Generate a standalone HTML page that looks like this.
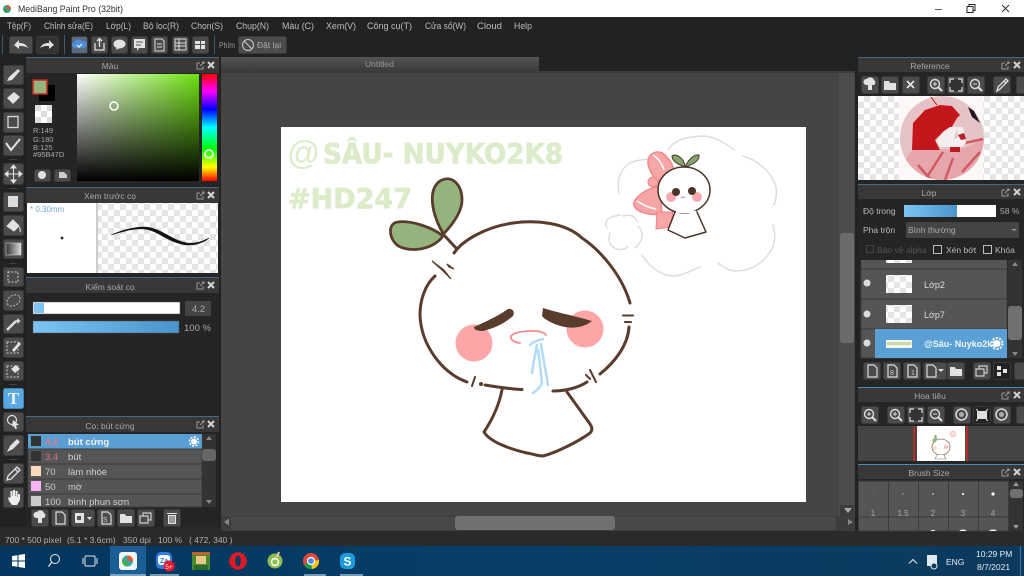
<!DOCTYPE html>
<html><head><meta charset="utf-8"><title>MediBang Paint Pro</title>
<style>
html,body{margin:0;padding:0;background:#222;overflow:hidden}
svg{display:block}
text{font-family:"Liberation Sans","Noto Sans CJK SC",sans-serif;font-size:9px;fill:#c4c4c4}
.m{font-size:9.5px;fill:#bdbdbd}
.h{fill:#a8a8a8;text-anchor:middle;font-size:8.5px}
.b{fill:#4b4b4b;stroke:#393939;stroke-width:1}
.i{fill:#e2e2e2}
.s{fill:none;stroke:#e2e2e2;stroke-width:1.3}
.ln{fill:none;stroke:#5a3c2d;stroke-width:3;stroke-linecap:round;stroke-linejoin:round}
.cl{fill:none;stroke:#dedede;stroke-width:1.5;stroke-linecap:round}
.mn{fill:none;stroke:#4a3328;stroke-width:1.5;stroke-linecap:round;stroke-linejoin:round}
.row{fill:#555;stroke:#3a3a3a;stroke-width:1}
.wm{font-family:"DejaVu Sans",sans-serif;font-weight:bold;fill:#dcecca;stroke:#dcecca;stroke-width:.8}
</style></head><body>
<svg width="1024" height="576" viewBox="0 0 1024 576" xmlns="http://www.w3.org/2000/svg">
<defs>
<pattern id="ck2" width="12" height="12" patternUnits="userSpaceOnUse"><rect width="12" height="12" fill="#fff"/><rect width="6" height="6" fill="#e4e4e4"/><rect x="6" y="6" width="6" height="6" fill="#e4e4e4"/></pattern>
<linearGradient id="sv1" x1="0" x2="1" y1="0" y2="0"><stop offset="0" stop-color="#fff"/><stop offset="1" stop-color="#6ee010"/></linearGradient>
<linearGradient id="sv2" x1="0" x2="0" y1="0" y2="1"><stop offset="0" stop-color="#000" stop-opacity="0"/><stop offset="1" stop-color="#000"/></linearGradient>
<linearGradient id="hue" x1="0" x2="0" y1="0" y2="1"><stop offset="0" stop-color="#f00"/><stop offset=".16" stop-color="#f0f"/><stop offset=".33" stop-color="#00f"/><stop offset=".5" stop-color="#0ff"/><stop offset=".7" stop-color="#0f0"/><stop offset=".87" stop-color="#ff0"/><stop offset="1" stop-color="#f00"/></linearGradient>
<linearGradient id="bl" x1="0" x2="1" y1="0" y2="0"><stop offset="0" stop-color="#7cc4f4"/><stop offset="1" stop-color="#4a94cc"/></linearGradient>
<linearGradient id="tb" x1="0" x2="1" y1="0" y2="0"><stop offset="0" stop-color="#04365f"/><stop offset=".5" stop-color="#083e68"/><stop offset="1" stop-color="#0c3a5c"/></linearGradient>
<linearGradient id="tab" x1="0" x2="0" y1="0" y2="1"><stop offset="0" stop-color="#555"/><stop offset="1" stop-color="#3a3a3a"/></linearGradient>
<linearGradient id="gr" x1="0" x2="1" y1="0" y2="0"><stop offset="0" stop-color="#333"/><stop offset="1" stop-color="#ddd"/></linearGradient>
<clipPath id="cc"><circle cx="942" cy="138" r="42"/></clipPath>
<clipPath id="bs"><rect x="858" y="481" width="150" height="50"/></clipPath>
<clipPath id="lc"><rect x="875" y="329" width="123" height="29"/></clipPath>
<g id="x"><path d="M0 0l6 6M6 0l-6 6" stroke="#d4d4d4" stroke-width="2" fill="none"/></g>
<g id="po"><path d="M1 2h3M1 2v6h6v-3M4 5l4-4M6 1h2v2" stroke="#9a9a9a" stroke-width="1" fill="none"/></g>
<g id="cloud"><path d="M5 9a3 3 0 0 1 1-6 4 4 0 0 1 7 1 3 3 0 0 1 0 5h-2v5H7V9H5z" class="i"/></g>
<g id="doc"><path d="M5 3h6l3 3v9H5z" fill="none" stroke="#ddd" stroke-width="1.2"/></g>
<g id="fold"><path d="M3 5h5l1 2h6v7H3z" class="i"/></g>
<g id="cp"><path d="M3 7h8v7H3zM6 7V4h8v7h-3" fill="none" stroke="#ccc" stroke-width="1.2"/></g>
<g id="zi"><circle cx="8" cy="8" r="4.5" fill="none" stroke="#ddd" stroke-width="1.4"/><path d="M11 11l4 4" stroke="#ddd" stroke-width="2"/><path d="M6 8h4M8 6v4" stroke="#ddd" stroke-width="1"/></g>
<g id="zo"><circle cx="8" cy="8" r="4.5" fill="none" stroke="#ddd" stroke-width="1.4"/><path d="M11 11l4 4" stroke="#ddd" stroke-width="2"/><path d="M6 8h4" stroke="#ddd" stroke-width="1"/></g>
<g id="fit"><rect x="3" y="3" width="12" height="12" fill="#333"/><path d="M3 7V3h4M11 3h4v4M15 11v4h-4M7 15H3v-4" fill="none" stroke="#ddd" stroke-width="1.2"/></g>
<g id="dp"><path d="M4 15l1-4 6-6 2 2-6 6zM11 5l2-2 2 2-2 2" fill="none" stroke="#e2e2e2" stroke-width="1.3"/></g>
<g id="rot"><circle cx="8.5" cy="8.5" r="5.5" fill="none" stroke="#ddd" stroke-width="1.5"/><circle cx="8.5" cy="8.5" r="2.5" fill="#aaa"/></g>
</defs>

<rect width="1024" height="576" fill="#222"/>
<!-- title bar -->
<rect width="1024" height="17" fill="#fff"/>
<circle cx="7" cy="9" r="4" fill="#3a9c9c"/><path d="M7 5a4 4 0 0 1 4 4H7z" fill="#e2562e"/><path d="M3 9a4 4 0 0 0 4 4V9z" fill="#3ba34d"/>
<text x="18" y="12" textLength="105" lengthAdjust="spacingAndGlyphs" style="font-size:9.5px;fill:#333">MediBang Paint Pro (32bit)</text>
<path d="M935 9.5h7" stroke="#555" stroke-width="1"/>
<path d="M967 6.5h6v6h-6zM969 6.5v-2h6v6h-2" fill="none" stroke="#222" stroke-width="1"/>
<path d="M1002 5l7 7M1009 5l-7 7" stroke="#333" stroke-width="1"/>

<!-- menu -->
<text class="m" x="7" y="29" textLength="24" lengthAdjust="spacingAndGlyphs">Tệp(F)</text>
<text class="m" x="44" y="29" textLength="49" lengthAdjust="spacingAndGlyphs">Chỉnh sửa(E)</text>
<text class="m" x="106" y="29" textLength="25" lengthAdjust="spacingAndGlyphs">Lớp(L)</text>
<text class="m" x="143" y="29" textLength="36" lengthAdjust="spacingAndGlyphs">Bộ lọc(R)</text>
<text class="m" x="191" y="29" textLength="32" lengthAdjust="spacingAndGlyphs">Chọn(S)</text>
<text class="m" x="236" y="29" textLength="33" lengthAdjust="spacingAndGlyphs">Chụp(N)</text>
<text class="m" x="282" y="29" textLength="32" lengthAdjust="spacingAndGlyphs">Màu (C)</text>
<text class="m" x="326" y="29" textLength="30" lengthAdjust="spacingAndGlyphs">Xem(V)</text>
<text class="m" x="367" y="29" textLength="45" lengthAdjust="spacingAndGlyphs">Công cụ(T)</text>
<text class="m" x="425" y="29" textLength="41" lengthAdjust="spacingAndGlyphs">Cửa sổ(W)</text>
<text class="m" x="477" y="29" textLength="25" lengthAdjust="spacingAndGlyphs">Cloud</text>
<text class="m" x="514" y="29" textLength="18" lengthAdjust="spacingAndGlyphs">Help</text>

<!-- top toolbar -->
<path d="M2.5 35v19M64.5 35v19M214.5 35v19" stroke="#3c5a70" stroke-width="1"/>
<rect class="b" x="9.5" y="36.5" width="23" height="17" rx="2"/><path d="M14 45l5-5v3c4 0 7 1 9 5-3-2-5-2-9-2v3z" class="i"/>
<rect class="b" x="36.5" y="36.5" width="22" height="17" rx="2" style="fill:#333"/><path d="M54 45l-5-5v3c-4 0-7 1-9 5 3-2 5-2 9-2v3z" class="i"/>
<rect class="b" x="71.5" y="36.5" width="16" height="17" rx="2" style="fill:#5a6b80"/><path d="M75 48a3 3 0 0 1 0-6 4 4 0 0 1 7-1 3.5 3.5 0 0 1 2 7z" fill="#4f8fd8"/><path d="M77 45l2 2 3-3" stroke="#fff" fill="none"/>
<rect class="b" x="91.5" y="36.5" width="16" height="17" rx="2"/><path d="M95 43v7h9v-7M99.5 47v-8M97 41l2.5-2.5L102 41" fill="none" stroke="#e2e2e2" stroke-width="1.3"/>
<rect class="b" x="111.5" y="36.5" width="16" height="17" rx="2"/><ellipse cx="119.5" cy="44" rx="6" ry="4.5" class="i"/><path d="M117 47l-1 3 4-2z" class="i"/>
<rect class="b" x="131.5" y="36.5" width="16" height="17" rx="2"/><path d="M134 39h11v9h-6l-2 3v-3h-3z" class="i"/><path d="M136 42h7M136 45h5" stroke="#555"/>
<rect class="b" x="151.5" y="36.5" width="16" height="17" rx="2"/><path d="M155 39h7l2 2v10h-9zM157 44h5M157 47h5" fill="none" stroke="#ddd"/>
<rect class="b" x="172.5" y="36.5" width="16" height="17" rx="2"/><path d="M175 39h11v11h-11zM175 43h11M175 46h11M179 39v11" fill="none" stroke="#ddd"/>
<rect class="b" x="192.5" y="36.5" width="16" height="17" rx="2"/><path d="M195 41h5v3h-5zM201 41h4v3h-4zM195 45h5v4h-5zM201 45h4v4h-4z" class="i"/>
<text x="219" y="48" textLength="16" lengthAdjust="spacingAndGlyphs" style="font-size:8.5px;fill:#999">Phím</text>
<rect class="b" x="238.5" y="36.5" width="48" height="17" rx="2"/><circle cx="248" cy="45" r="5.5" fill="none" stroke="#ccc"/><path d="M244 41l8 8" stroke="#ccc"/>
<text x="257" y="48" style="font-size:8.5px;fill:#aaa">Đặt lại</text>

<!-- canvas area -->
<rect x="221" y="71" width="634" height="459" fill="#474543"/>
<rect x="221" y="57" width="318" height="14" rx="1" fill="url(#tab)"/>
<text x="365" y="67" style="font-size:8.5px;fill:#999">Untitled</text>
<rect x="221" y="71" width="634" height="2" fill="#3e3c3a"/>
<rect x="839" y="73" width="15" height="443" fill="#4f4d4b"/>
<rect x="840" y="233" width="14" height="110" rx="3" fill="#6b6b6b"/>
<rect x="221" y="516" width="634" height="15" fill="#3f3d3b"/>
<rect x="231" y="517" width="605" height="13" fill="#4a4846"/>
<rect x="455" y="516" width="160" height="14" rx="3" fill="#707070"/>
<path d="M224 522l5-3.5v7z" fill="#888"/><path d="M848 519l5 3-5 3z" fill="#888"/>
<rect x="840" y="505" width="14" height="11" fill="#2c2c2c" opacity=".5"/><path d="M844 508h8l-4 5z" fill="#aaa"/>

<!-- drawing canvas -->
<rect x="281" y="127" width="525" height="375" fill="#fff"/>
<!-- watermark -->
<text x="287" y="164" textLength="33" lengthAdjust="spacingAndGlyphs" style="font-size:33px;fill:#dcecca">@</text>
<text class="wm" x="323" y="163" textLength="240" lengthAdjust="spacingAndGlyphs" style="font-size:28px">SÂU- NUYKO2K8</text>
<text class="wm" x="288" y="208" textLength="124" lengthAdjust="spacingAndGlyphs" style="font-size:28px">#HD247</text>
<!-- main character -->
<circle cx="474" cy="343" r="18.5" fill="#fda6a8"/><circle cx="585" cy="329" r="18.5" fill="#fda6a8"/>
<path d="M443.5 234C432 215 427 190 440 181C452 174 462 185 462 200C462 212 452 225 443.5 234Z" fill="#95b47d" stroke="#5a3c2d" stroke-width="2.8"/>
<path d="M443 236C432 227 410 220 398 222C388 223 389 236 395 243C403 253 432 252 443 236Z" fill="#95b47d" stroke="#5a3c2d" stroke-width="2.8"/>
<path class="ln" d="M443 234L456 248"/>
<path class="ln" d="M454 253C462 241 485 227 513 223C535 220 565 222 582 238C600 250 622 275 630 303"/>
<path class="ln" d="M629 327C628 345 615 362 600 374"/>
<path class="ln" d="M435 276C425 285 420 300 420 315C421 345 442 373 467 382"/>
<path d="M432 261L441 269L451 279L444 270Z" fill="#5a3c2d" stroke="#5a3c2d" stroke-width="1.2"/>
<path d="M447 264L454 269L449 267Z" fill="#5a3c2d" stroke="#5a3c2d" stroke-width="1.2"/>
<path class="ln" style="stroke-width:2" d="M623 315.5h10M625 322h6M475 377l-3 9M590 370l6 12M586 375l4 4"/>
<circle cx="481" cy="384" r="2" fill="#5a3c2d"/>
<path class="ln" d="M485 385C497 387 510 389 522 389.5"/>
<path class="ln" d="M553 391C565 391 578 388 587 382"/>
<path class="ln" d="M502 390C499 405 492 420 484 432C490 442 510 449 527 453C533 454 538 456 543 456C555 453 578 442 590 433C593 430 592 427 590 424L567 392"/>
<path d="M474 327C485 322 500 315 508 309C513 308 515 312 513 316C505 323 495 328 483 331C478 331 474 330 474 327Z" fill="#5a3c2d"/>
<path d="M543 308C555 312 575 316 592 321C586 326 576 329 565 327C555 325 545 320 542 316Z" fill="#5a3c2d"/>
<path d="M520 343C513 342 510 339 511 336C515 332 525 331 533 331C539 331 544 332 546 335" fill="none" stroke="#f58a90" stroke-width="1.8" stroke-linecap="round"/>
<path d="M530 345C533 342 538 340 543 339M537 345C535 355 533 365 532 373M541 344C543 358 546 372 548 385M538 350C540 362 541 375 542 383C540 388 536 391 533 393" fill="none" stroke="#b4dcf7" stroke-width="2.6" stroke-linecap="round"/>
<!-- thought cloud -->
<path class="cl" d="M619 193C616 178 622 168 630 163C636 160 642 160 648 159M668 150C672 142 682 137 703 136C712 136 725 142 734 150M743 156C757 160 772 172 776 187C777 194 776 200 774 205M773 225C776 235 775 245 770 252C762 265 748 271 737 271C730 271 724 268 718 263M700 267C690 271 682 276 673 276C663 276 650 268 642 255"/>
<path class="cl" d="M607 228C604 222 606 217 620 215M623 216C630 214 636 216 637 222M638 226C644 232 644 240 635 248M628 247C622 251 615 250 611 245C608 241 609 236 610 233"/>
<!-- mini character -->
<path d="M648 160C650 151 660 150 665 155C670 160 673 165 674 170L658 182C652 175 647 168 648 160Z" fill="#f7a6a8" stroke="#ef8289" stroke-width="1.3"/>
<path d="M653 155C658 158 662 164 664 170" stroke="#fff" stroke-width="1.5" fill="none"/>
<path d="M634 202C638 194 648 188 660 186L662 214C650 216 632 212 634 202Z" fill="#f7a6a8" stroke="#ef8289" stroke-width="1.3"/>
<path d="M637 201C643 205 650 208 656 209" stroke="#fff" stroke-width="1.5" fill="none"/>
<circle cx="653" cy="182" r="5" fill="#f7a6a8" stroke="#ef8289"/>
<path d="M657 212L656 229L670 227L673 212Z" fill="#f7a6a8" stroke="#ef8289" stroke-width="1"/>
<path d="M675 212L668 230L685 238L706 232L697 212" class="mn" style="fill:#fff"/>
<ellipse cx="684" cy="190" rx="26" ry="23" class="mn" style="fill:#fff"/>
<path d="M676 212h20" stroke="#fff" stroke-width="2.5"/>
<circle cx="671" cy="197" r="5" fill="#f9a9ad"/><circle cx="697" cy="197" r="5" fill="#f9a9ad"/>
<circle cx="676" cy="192" r="4" fill="#4a3328"/><circle cx="692" cy="191" r="4" fill="#4a3328"/>
<path d="M681 198q2-2 4 0" stroke="#c88" fill="none"/>
<path d="M685 167C680 165 672 162 672 156C676 153 684 158 685 166Z" fill="#86a56e" stroke="#4a3328"/>
<path d="M685 167C688 160 694 154 699 155C700 161 692 165 685 167Z" fill="#86a56e" stroke="#4a3328"/>

<!-- left tool column -->
<g>
<rect class="b" x="3.5" y="65.5" width="20" height="19" rx="2"/><path d="M7 81l2-4 9-8 2 2-8 9z" class="i"/>
<rect class="b" x="3.5" y="88.5" width="20" height="20" rx="2"/><path d="M7 98l7-6 6 5-7 7z" class="i"/>
<rect class="b" x="3.5" y="112.5" width="20" height="20" rx="2"/><rect x="8" y="116.5" width="10" height="11" fill="none" stroke="#d8d8d8" stroke-width="1.3"/>
<rect class="b" x="3.5" y="135.5" width="20" height="20" rx="2"/><path d="M6 143l5 7 9-11" fill="none" stroke="#e2e2e2" stroke-width="2"/>
<rect x="9" y="159" width="8" height="1" fill="#444"/>
<rect class="b" x="3.5" y="163.5" width="20" height="21" rx="2"/><path d="M13.5 166v16M6 174h15M13.5 165l-2.5 3h5zM13.5 183l-2.5-3h5zM5 174l3-2.5v5zM22 174l-3-2.5v5z" stroke="#e2e2e2" fill="#e2e2e2"/>
<rect x="9" y="188" width="8" height="1" fill="#444"/>
<rect class="b" x="3.5" y="192.5" width="20" height="19" rx="2"/><rect x="8" y="196" width="10" height="11" fill="#ddd"/>
<rect class="b" x="3.5" y="215.5" width="20" height="20" rx="2"/><path d="M7 226l6-6 6 6-5 5zM19 227q2 3 1 5" fill="#e2e2e2" stroke="#e2e2e2"/>
<rect class="b" x="3.5" y="239.5" width="20" height="19" rx="2"/><rect x="6" y="243" width="15" height="12" fill="url(#gr)" stroke="#ccc" stroke-width=".6"/>
<rect x="9" y="263" width="8" height="1" fill="#444"/>
<rect class="b" x="3.5" y="267.5" width="20" height="19" rx="2"/><rect x="8" y="272" width="10" height="10" fill="none" stroke="#ccc" stroke-dasharray="2 1.5"/>
<rect class="b" x="3.5" y="290.5" width="20" height="20" rx="2"/><ellipse cx="13.5" cy="300.5" rx="7" ry="5" transform="rotate(-30 13.5 300.5)" fill="none" stroke="#bbb" stroke-dasharray="2 1.5"/>
<rect class="b" x="3.5" y="314.5" width="20" height="19" rx="2"/><path d="M7 330l9-9" stroke="#e2e2e2" stroke-width="2.5"/><path d="M18 318l1 2 2 1-2 1-1 2-1-2-2-1 2-1z" class="i"/>
<rect class="b" x="3.5" y="337.5" width="20" height="20" rx="2"/><rect x="7" y="342" width="11" height="11" fill="none" stroke="#ccc" stroke-dasharray="2 1.5"/><path d="M12 350l7-8 2 2-7 8z" class="i"/>
<rect class="b" x="3.5" y="361.5" width="20" height="19" rx="2"/><rect x="7" y="366" width="11" height="11" fill="none" stroke="#ccc" stroke-dasharray="2 1.5"/><path d="M11 369l5-4 4 4-5 4z" class="i"/>
<rect x="9" y="384" width="8" height="1" fill="#444"/>
<rect x="3.5" y="388.5" width="20" height="20" rx="2" fill="#5aa8e0" stroke="#3f86bb"/><text x="13.5" y="404" style="font-family:'Liberation Serif',serif;font-size:17px;font-weight:bold;fill:#e9f4fb;text-anchor:middle">T</text>
<rect class="b" x="3.5" y="412.5" width="20" height="19" rx="2"/><circle cx="12" cy="420" r="4.5" fill="none" stroke="#ddd" stroke-width="1.2"/><path d="M13 420l6 5-3 .5 1 3-2 .5-1-3-2 1z" class="i"/>
<rect class="b" x="3.5" y="435.5" width="20" height="20" rx="2"/><path d="M7 452l3-6 7-7 3 3-7 7z" class="i"/>
<rect x="9" y="459" width="8" height="1" fill="#444"/>
<rect class="b" x="3.5" y="463.5" width="20" height="20" rx="2"/><path d="M7 480l1-4 7-7 3 3-7 7zM15 469l2-2 3 3-2 2" fill="none" stroke="#e2e2e2" stroke-width="1.3"/>
<rect class="b" x="3.5" y="487.5" width="20" height="20" rx="2"/><path d="M8 497l1 4 3 4h5l3-5v-6h-2v3h-.5v-6h-2v5h-.5v-6h-2v6h-.5v-5h-2v7z" fill="#eee"/>
</g>

<!-- colour panel -->
<rect x="26" y="57" width="193" height="129" fill="#252525"/>
<rect x="26" y="57" width="193" height="1" fill="#3f6a88"/>
<rect x="26" y="58" width="193" height="15" fill="#3a3836"/>
<text class="h" x="110" y="69">Màu</text>
<use href="#po" x="196" y="61"/><use href="#x" x="208" y="62"/>
<rect x="39" y="85" width="16" height="16" fill="#000"/>
<rect x="33" y="80" width="14" height="14" fill="#95b47d" stroke="#c8261c" stroke-width="1.5"/>
<rect x="35" y="105" width="17" height="18" fill="#fff"/><rect x="35" y="105" width="6" height="6" fill="#ddd"/><rect x="41" y="111" width="6" height="6" fill="#ddd"/><rect x="47" y="105" width="5" height="6" fill="#ddd"/><rect x="35" y="117" width="6" height="6" fill="#ddd"/><rect x="47" y="117" width="5" height="6" fill="#ddd"/>
<text x="33" y="133" style="font-size:7.5px;fill:#aaa">R:149</text><text x="33" y="142" style="font-size:7.5px;fill:#aaa">G:180</text><text x="33" y="150" style="font-size:7.5px;fill:#aaa">B:125</text><text x="33" y="157" style="font-size:7.5px;fill:#aaa">#95B47D</text>
<rect class="b" x="34.5" y="169.5" width="16" height="12" rx="2"/><circle cx="42" cy="175" r="4" class="i"/>
<rect class="b" x="54.5" y="169.5" width="16" height="12" rx="2"/><path d="M59 172h5l3 3v3h-8z" fill="#ccc"/>
<rect x="77" y="74" width="122" height="107" fill="url(#sv1)"/><rect x="77" y="74" width="122" height="107" fill="url(#sv2)"/>
<circle cx="114" cy="106" r="4" fill="none" stroke="#fff" stroke-width="1.5"/>
<rect x="202" y="74" width="15" height="107" fill="url(#hue)"/>
<circle cx="209" cy="154" r="4" fill="none" stroke="#fff" stroke-width="1.5"/>

<!-- preview panel -->
<rect x="26" y="187" width="193" height="89" fill="#252525"/>
<rect x="26" y="187" width="193" height="1" fill="#3f6a88"/>
<rect x="26" y="188" width="193" height="15" fill="#3a3836"/>
<text class="h" x="110" y="199">Xem trước cọ</text>
<use href="#po" x="196" y="191"/><use href="#x" x="208" y="192"/>
<rect x="27" y="203" width="70" height="70" fill="#fff"/>
<rect x="97" y="203" width="121" height="70" fill="url(#ck2)"/>
<rect x="96" y="203" width="2" height="70" fill="#ccc"/>
<text x="30" y="212" style="font-size:8px;fill:#6fa8d0">* 0.30mm</text>
<circle cx="62" cy="238" r="1.4" fill="#222"/>
<path d="M111 235C125 229 135 227 144 227C160 227 170 240 187 243C197 244 203 241 209 238C203 243 196 245 187 245C168 243 158 230 144 229C134 228 124 231 111 235Z" fill="#111" stroke="#111" stroke-width=".6"/>

<!-- brush control -->
<rect x="26" y="276" width="193" height="141" fill="#252525"/>
<rect x="26" y="277" width="193" height="1" fill="#3f6a88"/>
<rect x="26" y="278" width="193" height="15" fill="#3a3836"/>
<text class="h" x="110" y="290">Kiểm soát cọ</text>
<use href="#po" x="196" y="281"/><use href="#x" x="208" y="282"/>
<rect x="33" y="302" width="147" height="12" fill="#fff" stroke="#555" stroke-width=".5"/><rect x="34" y="303" width="10" height="10" fill="#7cc4f4"/>
<rect x="185" y="301" width="26" height="15" rx="1" fill="#444"/><text x="192" y="312" style="font-size:9.5px;fill:#aaa">4.2</text>
<rect x="33" y="321" width="146" height="12" fill="url(#bl)" stroke="#555" stroke-width=".5"/>
<text x="184" y="331" style="font-size:9.5px;fill:#aaa">100 %</text>

<!-- brush list -->
<rect x="26" y="416" width="193" height="111" fill="#252525"/>
<rect x="26" y="416" width="193" height="1" fill="#3f6a88"/>
<rect x="26" y="417" width="193" height="15" fill="#3a3836"/>
<text class="h" x="110" y="429">Cọ: bút cứng</text>
<use href="#po" x="196" y="420"/><use href="#x" x="208" y="421"/>
<rect x="28" y="434" width="174" height="15" fill="#5a9fd4"/>
<rect x="28" y="449" width="174" height="15" class="row"/><rect x="28" y="464" width="174" height="15" class="row"/><rect x="28" y="479" width="174" height="15" class="row"/><rect x="28" y="494" width="174" height="13" class="row"/>
<rect x="31" y="436" width="10" height="10" fill="#333"/><rect x="31" y="451" width="10" height="10" fill="#333"/><rect x="31" y="466" width="10" height="10" fill="#fbd9bd"/><rect x="31" y="481" width="10" height="10" fill="#f8b4f8"/><rect x="31" y="496" width="10" height="10" fill="#ccc"/>
<text x="45" y="445" style="font-size:9.5px;font-weight:bold;fill:#e27a86">4.2</text><text x="45" y="460" style="font-size:9.5px;fill:#d9727e">3.4</text><text x="45" y="475" style="font-size:9.5px;fill:#ccc">70</text><text x="45" y="490" style="font-size:9.5px;fill:#ccc">50</text><text x="45" y="505" style="font-size:9.5px;fill:#ccc">100</text>
<text x="68" y="445" style="font-size:9.5px;font-weight:bold;fill:#f0f0f0">bút cứng</text><text x="68" y="460" style="font-size:9.5px;fill:#d0d0d0">bút</text><text x="68" y="475" style="font-size:9.5px;fill:#d0d0d0">làm nhòe</text><text x="68" y="490" style="font-size:9.5px;fill:#d0d0d0">mờ</text><text x="68" y="505" style="font-size:9.5px;fill:#d0d0d0">bình phun sơn</text>
<circle cx="194" cy="441.5" r="3" fill="#fff"/><circle cx="194" cy="441.5" r="4.5" fill="none" stroke="#fff" stroke-width="1.5" stroke-dasharray="2 1.5"/>
<rect x="202" y="434" width="14" height="73" fill="#333"/>
<rect x="202" y="449" width="14" height="12" rx="3" fill="#666"/>
<path d="M206 440l3-4 3 4zM206 500l3 4 3-4z" fill="#888"/>
<rect class="b" x="31.5" y="509.5" width="17" height="17" rx="2"/><use href="#cloud" x="31" y="509"/>
<rect class="b" x="51.5" y="509.5" width="17" height="17" rx="2"/><use href="#doc" x="51" y="509"/>
<rect class="b" x="71.5" y="509.5" width="23" height="17" rx="2"/><path d="M75 513h9v10h-9z" class="i"/><rect x="77" y="516" width="4" height="4" fill="#555"/><path d="M87 517h5l-2.5 3z" class="i"/>
<rect class="b" x="97.5" y="509.5" width="17" height="17" rx="2"/><use href="#doc" x="97" y="509"/><text x="103" y="522" style="font-size:7px;fill:#ccc">S</text>
<rect class="b" x="117.5" y="509.5" width="17" height="17" rx="2"/><use href="#fold" x="117" y="509"/>
<rect class="b" x="137.5" y="509.5" width="17" height="17" rx="2"/><use href="#cp" x="137" y="509"/>
<rect class="b" x="163.5" y="509.5" width="17" height="17" rx="2"/><path d="M167 513h10v1h-10zM168 515h8v9h-8z" class="i"/><path d="M170 516v7M172 516v7M174 516v7" stroke="#555"/>

<!-- status -->
<rect y="527" width="221" height="19" fill="#2a2a2a"/><rect y="531" x="221" width="803" height="15" fill="#2a2a2a"/>
<text x="5" y="543" style="font-size:8.5px;fill:#b0b0b0">700 * 500 pixel</text><text x="67" y="543" style="font-size:8.5px;fill:#b0b0b0">(5.1 * 3.6cm)</text><text x="123" y="543" style="font-size:8.5px;fill:#b0b0b0">350 dpi</text><text x="158" y="543" style="font-size:8.5px;fill:#b0b0b0">100 %</text><text x="189" y="543" style="font-size:8.5px;fill:#b0b0b0">( 472, 340 )</text>

<!-- reference panel -->
<rect x="858" y="57" width="166" height="128" fill="#252525"/>
<rect x="858" y="57" width="166" height="1" fill="#3f6a88"/>
<rect x="858" y="58" width="166" height="14" fill="#3a3836"/>
<text class="h" x="930" y="69">Reference</text>
<use href="#po" x="1001" y="61"/><use href="#x" x="1014" y="62"/>
<rect class="b" x="861.5" y="76.5" width="17" height="17" rx="2"/><use href="#cloud" x="861" y="76"/>
<rect class="b" x="881.5" y="76.5" width="17" height="17" rx="2"/><use href="#fold" x="881" y="76"/>
<rect class="b" x="902.5" y="76.5" width="17" height="17" rx="2"/><path d="M907 81l7 7M914 81l-7 7" stroke="#e2e2e2" stroke-width="1.8"/>
<rect class="b" x="927.5" y="76.5" width="17" height="17" rx="2"/><use href="#zi" x="927" y="76"/>
<rect class="b" x="947.5" y="76.5" width="17" height="17" rx="2"/><use href="#fit" x="947" y="76"/>
<rect class="b" x="967.5" y="76.5" width="17" height="17" rx="2"/><use href="#zo" x="967" y="76"/>
<rect class="b" x="993.5" y="76.5" width="17" height="17" rx="2"/><use href="#dp" x="993" y="76"/>
<rect class="b" x="1016.5" y="76.5" width="10" height="17" rx="2"/>
<rect x="858" y="96" width="166" height="84" fill="url(#ck2)"/>
<rect x="899" y="96" width="84" height="84" fill="#fdf8f8"/>
<circle cx="942" cy="138" r="42" fill="#e6c3c6"/>
<g clip-path="url(#cc)">
<path d="M900 182L905 160L912 150L940 150L965 148L985 138L990 185Z" fill="#e7a6ab"/>
<path d="M918 165l14 16M925 180l18-28M945 180l8-22M962 172l18-20M965 143l18-4" stroke="#cf5a61" stroke-width="2.5"/>
<path d="M913 123L925 110L940 105L952 106L960 115L957 118L950 130L944 131L935 140L940 150L912 150Z" fill="#c4171c"/>
<path d="M950 127L963 127L966 143L962 147L940 147L936 141L944 131Z" fill="#f5eeee"/>
<path d="M957 129l1 9-4 1z" fill="#e8c5c8"/>
<path d="M950 147h10v5h-10z" fill="#bb1a20"/>
<path d="M968 107l6 4 6 12-8-6z" fill="#201820"/>
<path d="M958 135l6-2 2 6-5 1z" fill="#b52027"/>
</g>
<path d="M937 105q-3-4-6-8" stroke="#c4171c" fill="none"/>

<!-- layer panel -->
<rect x="858" y="184" width="166" height="203" fill="#252525"/>
<rect x="858" y="184" width="166" height="1" fill="#3f6a88"/>
<rect x="858" y="185" width="166" height="14" fill="#3a3836"/>
<text class="h" x="929" y="196">Lớp</text>
<use href="#po" x="1001" y="188"/><use href="#x" x="1014" y="189"/>
<text x="863" y="214" style="font-size:8.5px;fill:#bbb">Độ trong</text>
<rect x="904" y="205" width="92" height="12" fill="#fff"/><rect x="904" y="205" width="53" height="12" fill="url(#bl)"/>
<text x="1000" y="214" style="font-size:8.5px;fill:#aaa">58 %</text>
<text x="863" y="233" style="font-size:8.5px;fill:#bbb">Pha trộn</text>
<rect x="906" y="222" width="113" height="16" rx="1" fill="#444"/><text x="908" y="233" style="font-size:8.5px;fill:#aaa">Bình thường</text><path d="M1011 229h6l-3 2z" fill="#999"/>
<rect x="866.5" y="245.5" width="7" height="7" fill="none" stroke="#444"/><text x="877" y="253" style="font-size:8.5px;fill:#555">Bảo vệ alpha</text>
<rect x="933.5" y="245.5" width="8" height="8" fill="none" stroke="#bbb"/><text x="946" y="253" style="font-size:8.5px;fill:#bbb">Xén bớt</text>
<rect x="983.5" y="245.5" width="8" height="8" fill="none" stroke="#bbb"/><text x="995" y="253" style="font-size:8.5px;fill:#bbb">Khóa</text>
<rect x="861" y="260" width="146" height="9" fill="#555"/><rect x="886" y="260" width="26" height="3" fill="url(#ck2)"/>
<rect x="861" y="269" width="146" height="30" class="row"/><rect x="861" y="299" width="146" height="30" class="row"/><rect x="861" y="329" width="146" height="29" class="row"/>
<rect x="875" y="329" width="132" height="29" fill="#5aa0d4"/>
<circle cx="867" cy="283" r="3.5" fill="#ddd"/><circle cx="867" cy="314" r="3.5" fill="#ddd"/><circle cx="867" cy="343" r="3.5" fill="#ddd"/>
<rect x="886" y="275" width="26" height="18" fill="url(#ck2)"/><rect x="886" y="305" width="26" height="18" fill="url(#ck2)"/>
<rect x="886" y="340" width="26" height="8" fill="#f5f5e8"/><rect x="887" y="342" width="24" height="3" fill="#c8d8a8"/>
<text x="924" y="288" style="font-size:9px;fill:#ddd">Lớp2</text><text x="924" y="318" style="font-size:9px;fill:#ddd">Lớp7</text>
<g clip-path="url(#lc)"><text x="924" y="347" style="font-size:9px;font-weight:bold;fill:#eef6fc">@Sâu- Nuyko2k8</text></g>
<circle cx="997" cy="343.5" r="3.5" fill="#fff"/><circle cx="997" cy="343.5" r="5.5" fill="none" stroke="#fff" stroke-width="2" stroke-dasharray="2 1.5"/>
<rect x="1008" y="260" width="14" height="98" fill="#333"/>
<rect x="1008" y="306" width="14" height="34" rx="3" fill="#707070"/>
<path d="M1012 266l3-4 3 4zM1012 352l3 4 3-4z" fill="#888"/>
<rect class="b" x="863.5" y="362.5" width="17" height="17" rx="2"/><use href="#doc" x="863" y="362"/>
<rect class="b" x="883.5" y="362.5" width="17" height="17" rx="2"/><use href="#doc" x="883" y="362"/><text x="890" y="375" style="font-size:7px;fill:#ccc">8</text>
<rect class="b" x="903.5" y="362.5" width="17" height="17" rx="2"/><use href="#doc" x="903" y="362"/><text x="911" y="375" style="font-size:7px;fill:#ccc">1</text>
<rect class="b" x="923.5" y="362.5" width="23" height="17" rx="2"/><use href="#doc" x="922" y="362"/><path d="M938 369h6l-3 3z" class="i"/>
<rect class="b" x="947.5" y="362.5" width="17" height="17" rx="2"/><use href="#fold" x="947" y="362"/>
<rect class="b" x="973.5" y="362.5" width="17" height="17" rx="2"/><use href="#cp" x="973" y="362"/>
<rect class="b" x="993.5" y="362.5" width="17" height="17" rx="2" style="fill:#222"/><path d="M997 366h4v4h-4zM997 372h4v4h-4zM1003 369h4v4h-4z" class="i"/>
<rect class="b" x="1014.5" y="362.5" width="10" height="17" rx="2"/>

<!-- navigator -->
<rect x="858" y="387" width="166" height="78" fill="#252525"/>
<rect x="858" y="387" width="166" height="1" fill="#4a8ab8"/>
<rect x="858" y="388" width="166" height="14" fill="#3a3836"/>
<text class="h" x="930" y="399">Hoa tiêu</text>
<use href="#po" x="1001" y="391"/><use href="#x" x="1014" y="392"/>
<rect class="b" x="861.5" y="406.5" width="17" height="17" rx="2"/><use href="#zi" x="861" y="406"/>
<rect class="b" x="887.5" y="406.5" width="17" height="17" rx="2"/><use href="#zi" x="887" y="406"/>
<rect class="b" x="907.5" y="406.5" width="17" height="17" rx="2"/><use href="#fit" x="907" y="406"/>
<rect class="b" x="927.5" y="406.5" width="17" height="17" rx="2"/><use href="#zo" x="927" y="406"/>
<rect class="b" x="953.5" y="406.5" width="17" height="17" rx="2"/><use href="#rot" x="953" y="406"/>
<rect class="b" x="973.5" y="406.5" width="17" height="17" rx="2" style="fill:#222"/><rect x="977" y="411" width="10" height="8" fill="#ddd"/><path d="M976 409l2 2M988 409l-2 2M976 421l2-2M988 421l-2-2" stroke="#ddd"/>
<rect class="b" x="993.5" y="406.5" width="17" height="17" rx="2"/><use href="#rot" x="993" y="406"/>
<rect class="b" x="1016.5" y="406.5" width="10" height="17" rx="2"/>
<rect x="858" y="426" width="166" height="35" fill="#474543"/>
<rect x="917" y="426" width="48" height="35" fill="#fff"/>
<rect x="913.5" y="426" width="1.5" height="35" fill="#d22"/><rect x="966" y="426" width="1.5" height="35" fill="#d22"/>
<ellipse cx="941" cy="447" rx="9" ry="8" fill="#fff" stroke="#8a7468" stroke-width=".8"/>
<path d="M932 441q2-5 5-1l-2 3z" fill="#95b47d"/><path d="M934 436q3-4 3 4l-2-1z" fill="#95b47d"/>
<circle cx="935" cy="448" r="2" fill="#fdb"/><circle cx="946" cy="447" r="2" fill="#fbb"/>
<path d="M937 455l-2 4h11l-2-4" fill="#fff" stroke="#8a7468" stroke-width=".6"/>
<circle cx="953" cy="434" r="3" fill="#fdd" stroke="#e99" stroke-width=".5"/>

<!-- brush size -->
<rect x="858" y="464" width="166" height="67" fill="#252525"/>
<rect x="858" y="464" width="166" height="1" fill="#4a8ab8"/>
<rect x="858" y="465" width="166" height="14" fill="#3a3836"/>
<text class="h" x="929" y="476">Brush Size</text>
<use href="#po" x="1001" y="468"/><use href="#x" x="1014" y="469"/>
<g fill="#555" stroke="#3c3c3c" stroke-width="1">
<rect x="858.5" y="481" width="30" height="36"/><rect x="888.5" y="481" width="30" height="36"/><rect x="918.5" y="481" width="30" height="36"/><rect x="948.5" y="481" width="30" height="36"/><rect x="978.5" y="481" width="30" height="36"/>
<rect x="858.5" y="517" width="30" height="14"/><rect x="888.5" y="517" width="30" height="14"/><rect x="918.5" y="517" width="30" height="14"/><rect x="948.5" y="517" width="30" height="14"/><rect x="978.5" y="517" width="30" height="14"/>
</g>
<circle cx="873" cy="494" r=".4" fill="#aaa"/><circle cx="903" cy="494" r=".6" fill="#ccc"/><circle cx="933" cy="494" r=".8" fill="#ddd"/><circle cx="963" cy="494" r="1.1" fill="#eee"/><circle cx="993" cy="494" r="1.6" fill="#fff"/>
<text x="873" y="516" text-anchor="middle" style="font-size:8px;fill:#aaa">1</text><text x="903" y="516" text-anchor="middle" style="font-size:8px;fill:#aaa">1.5</text><text x="933" y="516" text-anchor="middle" style="font-size:8px;fill:#aaa">2</text><text x="963" y="516" text-anchor="middle" style="font-size:8px;fill:#aaa">3</text><text x="993" y="516" text-anchor="middle" style="font-size:8px;fill:#aaa">4</text>
<g clip-path="url(#bs)"><circle cx="903" cy="534" r="3" fill="#fff"/><circle cx="933" cy="534" r="4" fill="#fff"/><circle cx="963" cy="535" r="5.5" fill="#fff"/><circle cx="993" cy="536" r="6.5" fill="#fff"/></g>
<rect x="1009" y="481" width="14" height="50" fill="#333"/>
<rect x="1010" y="489" width="13" height="9" rx="3" fill="#707070"/>
<path d="M1013 486l3-4 3 4zM1013 525l3 4 3-4z" fill="#999"/>

<!-- taskbar -->
<rect y="546" width="1024" height="30" fill="url(#tb)"/>
<path d="M12 556l5.5-.8v5.3H12zM18.500 555l6.500-1v6.500h-6.500zM12 561.500h5.500v5.300L12 566zM18.500 561.500H25v6.500l-6.500-1z" fill="#fff"/>
<circle cx="55" cy="559" r="4.5" fill="none" stroke="#e8eef2" stroke-width="1"/><path d="M51.500 562.500l-3 4" stroke="#e8eef2" stroke-width="1.2"/>
<rect x="85" y="556" width="10" height="10" rx="1" fill="none" stroke="#dfe8ee"/><path d="M83 558v6M97 558v6" stroke="#dfe8ee"/>
<rect x="110" y="546" width="36" height="30" fill="#1b5e96"/>
<rect x="119" y="552" width="18" height="18" rx="3" fill="#f4f4f4"/><circle cx="127.5" cy="561" r="5.5" fill="#3aa7a0"/><path d="M127.5 555.5a5.500 5.500 0 0 1 5.500 5.500h-5.500z" fill="#e55a32"/><path d="M122 561a5.500 5.500 0 0 0 5.500 5.500V561z" fill="#3fae4a"/>
<rect x="156" y="552" width="16" height="17" rx="5" fill="#2f7fe0"/><rect x="158" y="555" width="12" height="10" rx="3" fill="#fff"/><text x="160" y="563" style="font-size:7px;font-weight:bold;fill:#2f7fe0">Za</text>
<circle cx="169" cy="566" r="5.5" fill="#e8192c"/><text x="169" y="569" text-anchor="middle" style="font-size:6.5px;fill:#fff">5+</text>
<rect x="192" y="552" width="18" height="18" fill="#4a8a2c"/><rect x="196" y="556" width="10" height="8" fill="#e9c88a"/><rect x="192" y="552" width="18" height="3" fill="#c2602a"/><rect x="194" y="565" width="14" height="5" fill="#2a6a2a"/>
<circle cx="238" cy="561" r="7" fill="none" stroke="#e01a24" stroke-width="3.5"/><ellipse cx="238" cy="561" rx="4" ry="7.5" fill="none" stroke="#e01a24" stroke-width="2.5"/>
<circle cx="275" cy="561" r="7.5" fill="#8cbf4c"/><circle cx="275" cy="562" r="3.5" fill="none" stroke="#fff" stroke-width="1.5"/><path d="M279 552l-2 5" stroke="#f4c6a0" stroke-width="2"/>
<circle cx="311" cy="561" r="8" fill="#dd4b3e"/><path d="M311 561L304 565a8 8 0 0 0 8 4z" fill="#199b4f"/><path d="M311 561l8-1a8 8 0 0 1-7 9z" fill="#f5c518"/><circle cx="311" cy="561" r="3.5" fill="#4a90e2" stroke="#fff" stroke-width="1.2"/>
<rect x="340" y="553" width="15" height="16" rx="5" fill="#1a9be0"/><text x="347.5" y="565.5" text-anchor="middle" style="font-size:12px;font-weight:bold;fill:#fff">S</text>
<path d="M110 575h36M150 575h29M304 575h22M340 575h23" stroke="#9ab9d2" stroke-width="1.5"/>
<path d="M909 563.500l4-4 4 4" fill="none" stroke="#e8eef2" stroke-width="1"/>
<rect x="927" y="555" width="10" height="11" fill="#dfe8ee"/><circle cx="934" cy="566" r="3" fill="#0a3a5e" stroke="#dfe8ee"/>
<text x="946" y="565" style="font-size:8.5px;fill:#e4ecf2">ENG</text>
<text x="976" y="557" style="font-size:8.5px;fill:#e4ecf2">10:29 PM</text>
<text x="977" y="570" style="font-size:8.5px;fill:#e4ecf2">8/7/2021</text>
<path d="M1020.5 546v30" stroke="#4c7391" stroke-width="1"/>
</svg>
</body></html>
